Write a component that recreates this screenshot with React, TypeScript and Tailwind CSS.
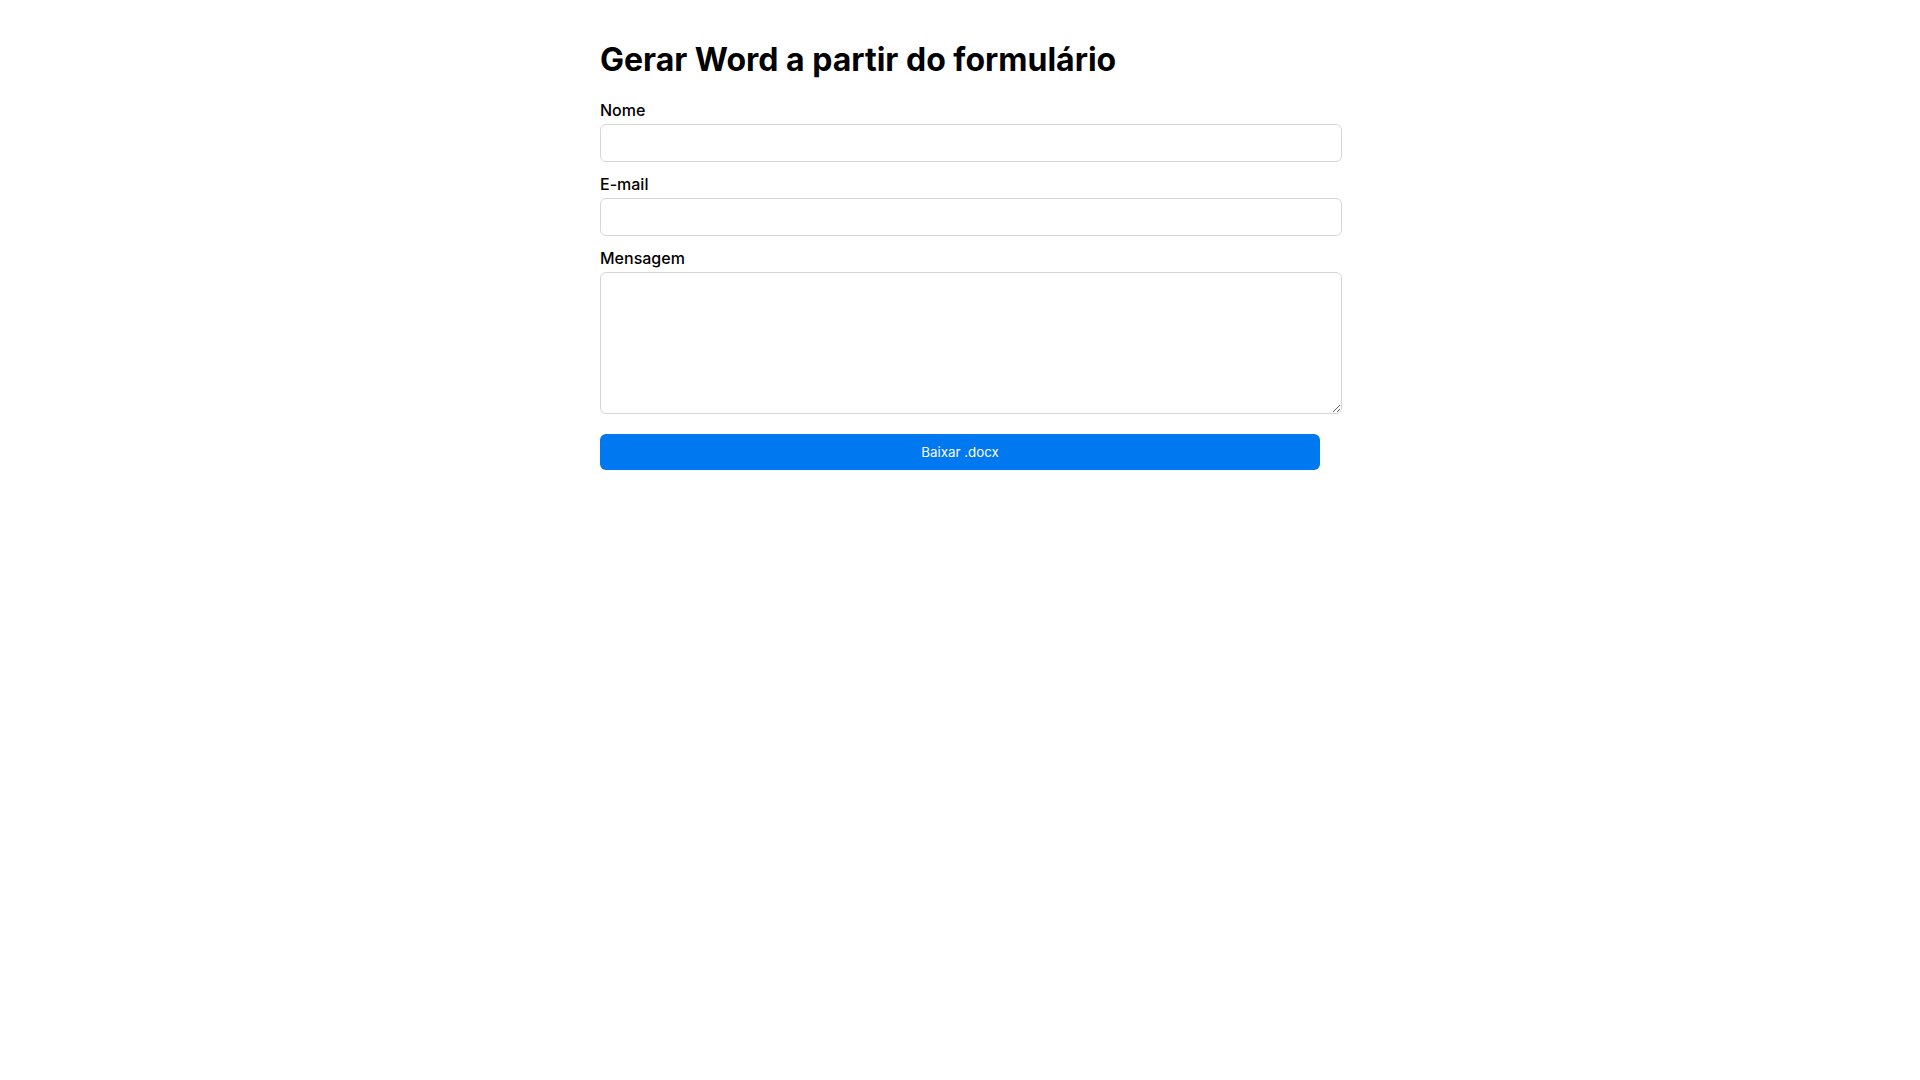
import React from "react";

export default function App() {
  return (
    <div className="min-h-screen bg-white" style={{ fontFamily: "Inter, 'Noto Sans', sans-serif" }}>
      <div className="mx-auto w-[720px] pt-[41px]">
        <h1 className="text-[32px] leading-[38px] font-bold text-black mb-[21px]">
          Gerar Word a partir do formulário
        </h1>
        <form className="flex flex-col" onSubmit={(e) => e.preventDefault()}>
          <label className="block text-[16px] leading-[20px] font-medium text-black mb-[4px]">Nome</label>
          <input
            type="text"
            className="block w-[742px] h-[38px] border border-[#d6d6d6] rounded-[6px] px-[10px] text-[16px] outline-none bg-white"
          />
          <label className="block text-[16px] leading-[20px] font-medium text-black mt-[12px] mb-[4px]">E-mail</label>
          <input
            type="email"
            className="block w-[742px] h-[38px] border border-[#d6d6d6] rounded-[6px] px-[10px] text-[16px] outline-none bg-white"
          />
          <label className="block text-[16px] leading-[20px] font-medium text-black mt-[12px] mb-[4px]">Mensagem</label>
          <textarea
            className="block w-[742px] h-[142px] border border-[#d6d6d6] rounded-[6px] p-[10px] text-[16px] outline-none bg-white resize"
          />
          <button
            type="submit"
            className="mt-[20px] w-[720px] h-[36px] rounded-[6px] bg-[#0078f0] text-white text-[13.33px] leading-[16px]"
          >
            Baixar .docx
          </button>
        </form>
      </div>
    </div>
  );
}
